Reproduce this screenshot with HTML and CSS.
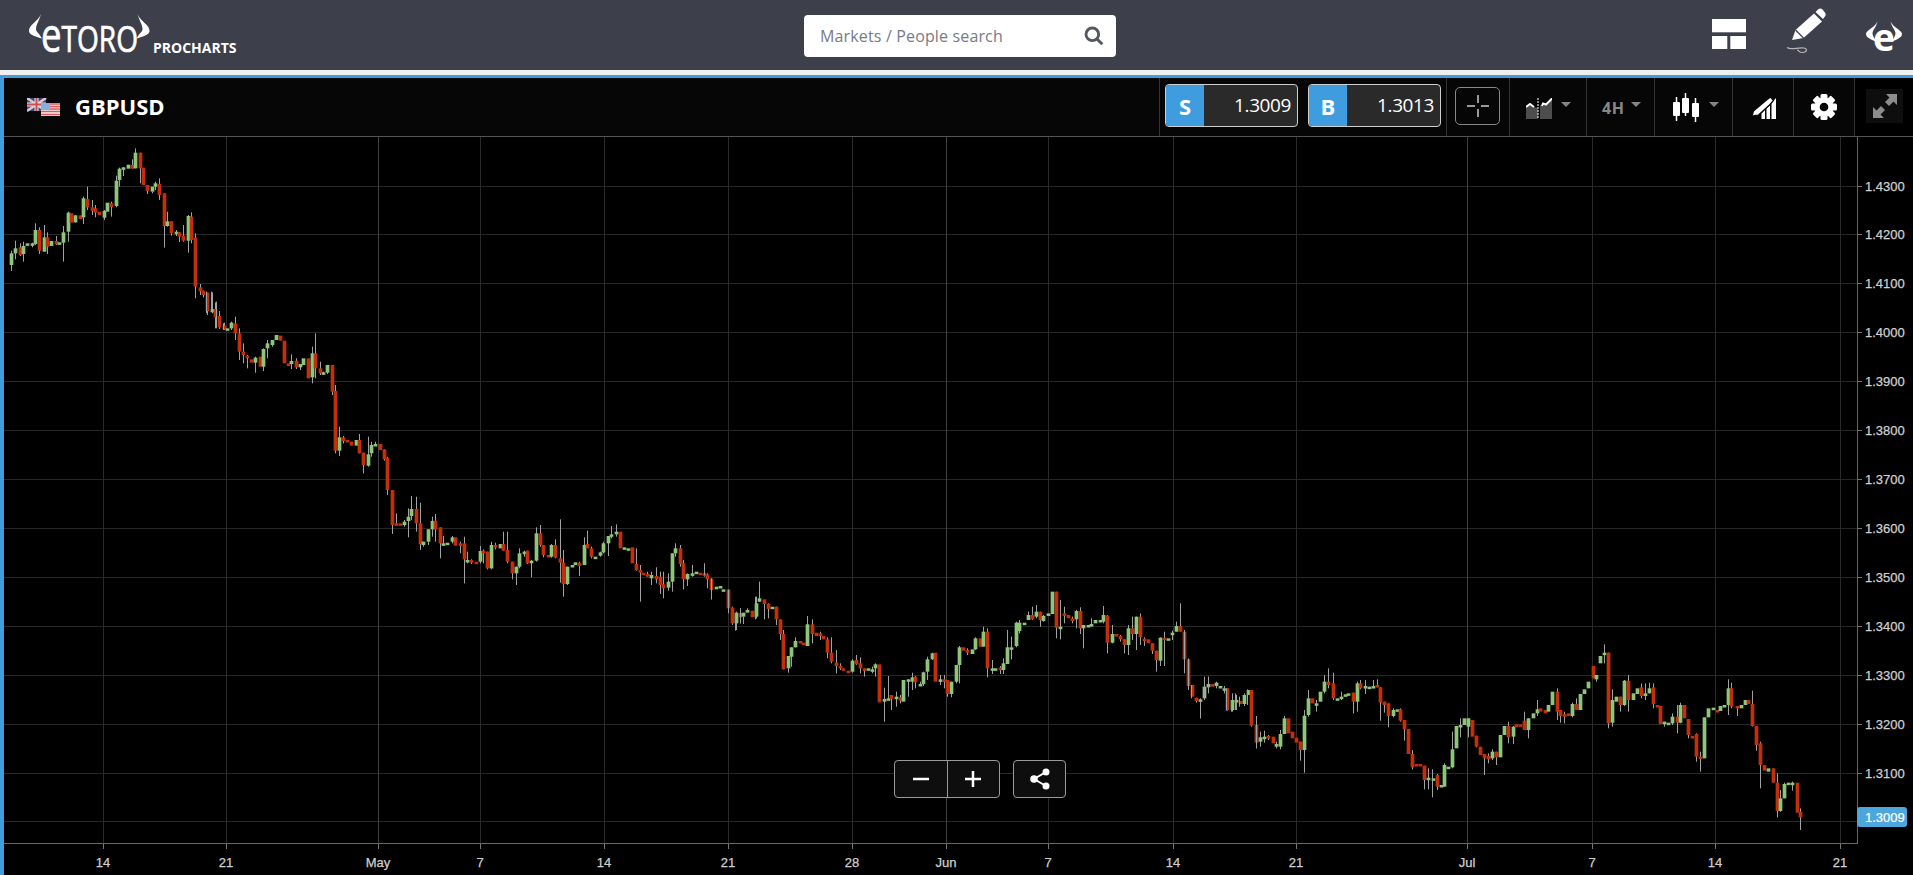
FILE: index.html
```html
<!DOCTYPE html>
<html lang="en">
<head>
<meta charset="utf-8">
<title>eToro ProCharts - GBPUSD</title>
<link rel="stylesheet" href="styles.css">
</head>
<body>
<header class="topbar">
  <div class="brand">
    <svg class="brand-logo" viewBox="0 0 240 70" aria-label="eToro ProCharts">
      <path class="logo-fill" d="M41 14C38 22 29 24 29 31C29 35 37 37 42 38.5C39 33 36 32 36 29C36 25 39 21 41 14Z"/>
      <path class="logo-fill" d="M137.500 14C140.500 22 149.500 24 149.500 31C149.500 35 141.500 37 136.500 38.500C139.500 33 142.500 32 142.500 29C142.500 25 139.500 21 137.500 14Z"/>
      <text class="logo-word" x="41" y="51.500" textLength="97" lengthAdjust="spacingAndGlyphs"><tspan class="logo-e">e</tspan>TORO</text>
      <text class="logo-sub" x="153" y="53">PROCHARTS</text>
    </svg>
  </div>
  <div class="search">
    <span class="search-text">Markets / People search</span>
    <svg class="search-icon" viewBox="0 0 18 18"><circle cx="7.500" cy="7.500" r="5.700"/><path d="M11.800 11.800L16.500 16.500"/></svg>
  </div>
  <nav class="top-actions">
    <svg class="icon-layout" viewBox="0 0 34 30"><rect width="34" height="13.300"/><rect y="17" width="15.300" height="13"/><rect x="18.300" y="17" width="15.700" height="13"/></svg>
    <svg class="icon-pencil" viewBox="0 0 46 50">
      <path class="white" d="M12 34L15.500 24L34 7.500L42 15.500L23.500 32Z"/>
      <path class="black-line" d="M15.500 24L23.500 32"/>
      <path class="white" d="M35.500 6L38 3.500C39.500 2.300 41 2.300 42.500 3.500L45 6.500C46 8 46 9.500 44.500 11L43 13Z"/>
      <path class="squiggle" d="M7 41.500C11 44.500 18 41 24 42C28 43 27 46.500 22 46.500C19 46.500 19 44 17 44"/>
    </svg>
    <svg class="icon-etoro" viewBox="0 0 36 34">
      <path class="white" d="M11.500 1C10 7 0 10 0 14C0 18 7 20 10.500 22C8.500 18 6.500 16 6.500 13.500C6.500 10 10.500 7 11.500 1Z"/>
      <path class="white" d="M24.500 1C26 7 36 10 36 14C36 18 29 20 25.500 22C27.500 18 29.500 16 29.500 13.500C29.500 10 25.500 7 24.500 1Z"/>
      <text class="etoro-e" x="18" y="31">e</text>
    </svg>
  </nav>
</header>
<div class="strip"></div>
<main class="workspace">
  <div class="toolbar">
    <div class="ticker">
      <svg class="flags" viewBox="0 0 33 18">
        <rect class="uk-bg" width="19" height="13"/>
        <path class="uk-white" d="M0 0L19 13M19 0L0 13"/>
        <path class="uk-white-thick" d="M9.500 0V13M0 6.500H19"/>
        <path class="uk-red" d="M9.500 0V13M0 6.500H19"/>
        <rect class="us-white" x="14" y="5" width="19" height="13"/>
        <path class="us-red" d="M14 6H33M14 8.500H33M14 11H33M14 13.500H33M14 16.500H33"/>
        <rect class="us-blue" x="14" y="5" width="9" height="7"/>
      </svg>
      <span class="ticker-name">GBPUSD</span>
    </div>
    <div class="tools">
      <div class="tool tool-prices">
        <div class="quote"><span class="quote-tag">S</span><span class="quote-price">1.3009</span></div>
        <div class="quote"><span class="quote-tag">B</span><span class="quote-price">1.3013</span></div>
      </div>
      <div class="tool tool-cross">
        <div class="cross-box">
          <svg class="icon-cross" viewBox="0 0 28 28"><path d="M14 3V11M14 17V25M3 14H11M17 14H25"/></svg>
        </div>
      </div>
      <div class="tool tool-type">
        <svg class="icon-area" viewBox="0 0 26 22">
          <path class="area-fill" d="M0 10L4 7L8 10L12 11V22H0ZM14 8L17 9L21 6L26 1V22H14Z"/>
          <path class="area-line" d="M0 10L4 7L8 10M16 9L17 6.500L20 7.500L26 1.500"/>
          <path class="area-dash" d="M12 1V22"/>
        </svg>
        <span class="caret"></span>
      </div>
      <div class="tool tool-period">
        <span class="period">4H</span>
        <span class="caret"></span>
      </div>
      <div class="tool tool-candle">
        <svg class="icon-candles" viewBox="0 0 26 29">
          <path class="wick" d="M3.500 4V28M12.500 0V23M22.500 5V29"/>
          <rect class="white" x="0" y="9" width="7" height="14" rx="1"/>
          <rect class="white" x="9" y="5" width="7" height="15" rx="1"/>
          <rect class="white" x="19" y="10" width="7" height="14" rx="1"/>
        </svg>
        <span class="caret"></span>
      </div>
      <div class="tool tool-draw">
        <svg class="icon-draw" viewBox="0 0 25 22">
          <path class="white" d="M25 1V22H20.500V6ZM19 8V22H15.500V11.500ZM14 13V22H10.500V16.500Z"/>
          <path class="white pencil-edge" d="M0.500 21L2.500 14L15.500 3L19.500 0L22.500 3.500L19 7.500L7.500 18L3 18.500Z"/>
        </svg>
      </div>
      <div class="tool tool-gear">
        <svg class="icon-gear" viewBox="0 0 26 26">
          <circle class="white" cx="13" cy="13" r="9.500"/>
          <g class="gear-teeth">
            <rect x="9.500" y="0" width="7" height="26" rx="1.500"/>
            <rect x="9.500" y="0" width="7" height="26" rx="1.500" transform="rotate(45 13 13)"/>
            <rect x="9.500" y="0" width="7" height="26" rx="1.500" transform="rotate(90 13 13)"/>
            <rect x="9.500" y="0" width="7" height="26" rx="1.500" transform="rotate(135 13 13)"/>
          </g>
          <circle class="gear-hole" cx="13" cy="13" r="4.300"/>
        </svg>
      </div>
      <div class="tool tool-expand">
        <div class="expand-box">
          <svg class="icon-expand" viewBox="0 0 24 24">
            <path d="M13 0H24V11L20.500 7.500L16 12L12 8L16.500 3.500Z"/>
            <path d="M11 24H0V13L3.500 16.500L8 12L12 16L7.500 20.500Z"/>
          </svg>
        </div>
      </div>
    </div>
  </div>
  <div class="plot">
    <svg id="chart" class="chart" viewBox="4 137 1909 738"></svg>
    <div class="zoom-controls">
      <div class="ctrl ctrl-zoom">
        <span class="ctrl-half"><svg class="ctrl-icon" viewBox="0 0 16 16"><path d="M0 8H16"/></svg></span>
        <span class="ctrl-half ctrl-half-right"><svg class="ctrl-icon" viewBox="0 0 16 16"><path d="M0 8H16M8 0V16"/></svg></span>
      </div>
      <div class="ctrl ctrl-share">
        <svg class="share-icon" viewBox="0 0 22 22">
          <path class="share-line" d="M17 4L5 11L17 18"/>
          <circle cx="17" cy="4" r="3.500"/><circle cx="5" cy="11" r="3.800"/><circle cx="17" cy="18" r="3.500"/>
        </svg>
      </div>
    </div>
  </div>
</main>
<script src="chart.js"></script>
</body>
</html>
```
FILE: styles.css
```css
* { box-sizing: border-box; }
html, body { margin: 0; height: 100%; }
body {
  background: #000;
  overflow: hidden;
  font-family: "Open Sans", "Liberation Sans", sans-serif;
  display: flex;
  flex-direction: column;
}
svg { display: block; }

.topbar {
  height: 70px;
  flex: none;
  background: #3d3f4b;
  display: grid;
  grid-template-columns: 804px 312px 1fr;
  align-items: start;
}
.brand-logo { width: 240px; height: 70px; }
.logo-fill { fill: #fff; }
.logo-word { font: 400 36px "Open Sans", sans-serif; fill: #fff; stroke: #fff; stroke-width: .7px; }
.logo-e { font-size: 47px; }
.logo-sub { font: 700 14px "Open Sans", sans-serif; fill: #fff; }

.search {
  margin-top: 15px;
  height: 42px;
  background: #fff;
  border-radius: 4px;
  display: flex;
  align-items: center;
  justify-content: space-between;
  padding: 0 12px 0 16px;
}
.search-text { font-size: 16px; letter-spacing: .15px; color: #777b85; }
.search-icon { width: 20px; height: 20px; fill: none; stroke: #555862; stroke-width: 2.600; }

.top-actions {
  display: flex;
  justify-content: flex-end;
  align-items: flex-start;
  padding-right: 11px;
}
.white { fill: #fff; }
.icon-layout { width: 34px; height: 30px; margin-top: 19px; fill: #fff; }
.icon-pencil { width: 46px; height: 50px; margin: 6px 0 0 34px; overflow: visible; }
.black-line { stroke: #3d3f4b; stroke-width: 1.200; fill: none; }
.squiggle { stroke: #b6b6b6; stroke-width: 1.200; fill: none; }
.icon-etoro { width: 36px; height: 34px; margin: 20px 0 0 40px; overflow: visible; }
.etoro-e { font: 700 37px "Open Sans", sans-serif; fill: #fff; text-anchor: middle; }

.strip { height: 5px; flex: none; background: #f0f0f0; }

.workspace {
  flex: 1;
  min-height: 0;
  display: flex;
  flex-direction: column;
  border-top: 3px solid #3f9ddf;
  border-left: 4px solid #3f9ddf;
  background: #000;
}
.toolbar {
  height: 59px;
  flex: none;
  background: #060606;
  border-bottom: 1px solid #555;
  display: flex;
  justify-content: space-between;
}
.ticker { display: flex; align-items: center; gap: 15px; padding: 0 0 2px 23px; }
.flags { width: 33px; height: 18px; margin-top: 2px; }
.uk-bg { fill: #3c4a78; }
.uk-white { stroke: #d9c9d0; stroke-width: 2.500; fill: none; }
.uk-white-thick { stroke: #e6e0e2; stroke-width: 4; fill: none; }
.uk-red { stroke: #cf4b52; stroke-width: 2; fill: none; }
.us-white { fill: #f4eeee; }
.us-red { stroke: #e0575b; stroke-width: 1.300; fill: none; }
.us-blue { fill: #83aee0; }
.ticker-name { font-size: 22px; font-weight: 700; color: #fff; }

.tools { display: flex; height: 100%; }
.tool {
  border-left: 1px solid #333;
  display: flex;
  position: relative;
  align-items: flex-start;
}
.tool-prices { width: 287px; gap: 10px; padding: 6px 0 0 5px; }
.quote {
  width: 133px;
  height: 43px;
  display: flex;
  background: #2a2a2a;
  border: 1px solid #cfcfcf;
  border-radius: 4px;
  overflow: hidden;
}
.quote-tag {
  width: 38px;
  background: #3f9ddf;
  color: #fff;
  font-size: 22px;
  font-weight: 700;
  display: flex;
  align-items: center;
  justify-content: center;
}
.quote-price {
  flex: 1;
  color: #fff;
  font-size: 19px;
  letter-spacing: -.4px;
  text-align: right;
  padding: 8px 6px 0 0;
  line-height: 24px;
}
.tool-cross { width: 63px; padding: 9px 0 0 8px; }
.cross-box {
  width: 45px;
  height: 38px;
  border: 1px solid #888;
  border-radius: 5px;
  display: flex;
  align-items: center;
  justify-content: center;
}
.icon-cross { width: 28px; height: 28px; fill: none; stroke: #9a9a9a; stroke-width: 2; }
.tool-type { width: 77px; padding: 19px 0 0 16px; }
.icon-area { width: 26px; height: 22px; }
.area-fill { fill: #4d4d4d; }
.area-line { fill: none; stroke: #fff; stroke-width: 2; }
.area-dash { fill: none; stroke: #fff; stroke-width: 1; stroke-dasharray: 2 1; }
.caret {
  width: 0;
  height: 0;
  border-left: 5.500px solid transparent;
  border-right: 5.500px solid transparent;
  border-top: 5px solid #858585;
  margin: 5px 0 0 9px;
}
.tool-period { width: 68px; padding: 21px 0 0 15px; }
.tool-period .caret { margin: 3px 0 0 7px; }
.period { font-size: 16px; font-weight: 700; color: #888; line-height: 18px; letter-spacing: .5px; }
.tool-candle { width: 78px; padding: 15px 0 0 18px; }
.tool-candle .caret { margin: 9px 0 0 10px; }
.icon-candles { width: 26px; height: 29px; }
.wick { stroke: #fff; stroke-width: 1.500; fill: none; }
.tool-draw { width: 61px; padding: 19px 0 0 18px; }
.icon-draw { width: 25px; height: 22px; }
.pencil-edge { stroke: #060606; stroke-width: 1.200; }
.tool-gear { width: 61px; padding: 16px 0 0 17px; }
.icon-gear { width: 26px; height: 26px; }
.gear-teeth { fill: #fff; }
.gear-hole { fill: #060606; }
.tool-expand { width: 59px; background: #000; padding: 11px 0 0 11px; }
.expand-box {
  width: 37px;
  height: 34px;
  background: #0e0e0e;
  display: flex;
  align-items: center;
  justify-content: center;
}
.icon-expand { width: 24px; height: 24px; fill: #8d8d8d; }

.plot { flex: 1; min-height: 0; position: relative; }
.chart { width: 1909px; height: 738px; }
.grid-h { fill: #272727; }
.grid-v { fill: #2b2b2b; }
.grid-month { fill: #404040; }
.axis-line { fill: #666; }
.axis-tick { fill: #777; }
.axis-label {
  font: 400 13px "Liberation Sans", Arial, sans-serif;
  fill: #d0d0d0;
  stroke: #d0d0d0;
  stroke-width: .25px;
}
.axis-label-x { text-anchor: middle; }
.last-box { fill: #4da6dc; }
.last-label {
  font: 400 13px "Liberation Sans", Arial, sans-serif;
  fill: #fff;
  stroke: #fff;
  stroke-width: .2px;
}
.c-wick { fill: #a2a2a2; }
.c-up { fill: #8dc67b; }
.c-down { fill: #c2300b; }

.zoom-controls {
  position: absolute;
  left: 890px;
  top: 623px;
  display: flex;
  gap: 13px;
}
.ctrl {
  height: 38px;
  background: #0e0e0e;
  border: 1px solid #9a9a9a;
  border-radius: 4px;
  display: flex;
  align-items: center;
  justify-content: center;
}
.ctrl-zoom { width: 106px; }
.ctrl-share { width: 53px; }
.ctrl-half { flex: 1; height: 100%; display: flex; align-items: center; justify-content: center; }
.ctrl-half-right { border-left: 1px solid #9a9a9a; }
.ctrl-icon { width: 16px; height: 16px; stroke: #fff; stroke-width: 2.500; fill: none; }
.share-icon { width: 22px; height: 22px; fill: #fff; }
.share-line { stroke: #fff; stroke-width: 2; fill: none; }
```
FILE: chart.js
```js
var NS = "http://www.w3.org/2000/svg";
var svg = document.getElementById("chart");

function rect(x, y, w, h, cls) {
  var r = document.createElementNS(NS, "rect");
  r.setAttribute("x", x);
  r.setAttribute("y", y);
  r.setAttribute("width", w);
  r.setAttribute("height", h);
  r.setAttribute("class", cls);
  svg.appendChild(r);
}
function label(x, y, str, cls) {
  var t = document.createElementNS(NS, "text");
  t.setAttribute("x", x);
  t.setAttribute("y", y);
  t.setAttribute("class", cls);
  t.textContent = str;
  svg.appendChild(t);
}

var plotRight = 1857, axisY = 843, plotTop = 137;

// horizontal grid and price axis
var prices = ["1.4300","1.4200","1.4100","1.4000","1.3900","1.3800","1.3700","1.3600","1.3500","1.3400","1.3300","1.3200","1.3100"];
prices.forEach(function (p, i) {
  var y = Math.round(185.5 + i * 48.98);
  rect(4, y, plotRight - 4, 1, "grid-h");
  rect(plotRight, y, 5, 1, "axis-tick");
  label(1865, y + 5, p, "axis-label");
});
rect(4, 821, plotRight - 4, 1, "grid-h");

// vertical grid and time axis
var times = [[103,"14"],[226,"21"],[378,"May",1],[480,"7"],[604,"14"],[728,"21"],[852,"28"],[946,"Jun",1],[1048,"7"],[1173,"14"],[1296,"21"],[1467,"Jul",1],[1592,"7"],[1715,"14"],[1840,"21"]];
times.forEach(function (t) {
  rect(t[0], plotTop, 1, axisY - plotTop, t[2] ? "grid-month" : "grid-v");
  rect(t[0], axisY, 1, 6, "axis-tick");
  label(t[0], 867, t[1], "axis-label axis-label-x");
});
rect(4, axisY, plotRight - 4 + 1, 1, "axis-line");
rect(plotRight, plotTop, 1, axisY - plotTop + 1, "axis-line");

// candles traced as [x, open, close] triples in crop coordinates
var crops = [
{ x: 0, y: 130, sx: 3, sy: 3,
  c: [35,405,370,46,370,355,60,352,375,71,372,348,82,344,340,96,342,340,106,342,300,118,300,362,132,365,322,143,322,350,155,348,333,168,333,343,178,340,337,190,338,307,204,305,248,215,250,278,226,277,256,240,256,267,251,262,205,262,207,232,276,232,242,287,235,248,298,245,255,312,263,243,323,245,218,334,220,231,348,228,152,359,150,116,370,118,112,384,116,104,396,105,116,406,115,68,420,68,115,431,113,165,442,165,183,456,185,170,467,170,160,478,162,195,492,190,288,503,288,274,514,274,310,528,308,305,539,307,320,550,317,332,564,332,258,575,260,330,586,323,470,600,472,484,611,482,495,622,488,543,636,547,537,647,537,562,658,558,592,672,587,598,683,597,595,694,595,578],
  w: [35,362,423,46,332,388,60,340,378,71,335,395,96,338,352,106,280,345,118,292,372,132,285,365,143,307,372,168,318,345,190,288,395,204,245,335,226,255,278,251,200,282,262,170,240,276,210,255,287,225,262,312,240,270,334,215,260,348,137,232,359,113,170,370,112,138,396,88,116,406,55,115,420,68,160,442,165,192,456,185,190,467,155,180,478,145,210,492,190,353,503,245,290,514,274,317,528,300,318,539,307,336,550,285,335,564,255,368,575,247,340,586,310,505,600,462,495,611,482,502,622,488,555,636,487,550,647,517,595,658,543,597,672,578,600,694,575,600]
},
{ x: 200, y: 290, sx: 2.8, sy: 3,
  c: [100,100,130,111,130,185,122,185,195,134,197,205,145,208,218,156,218,203,168,200,230,179,230,177,190,175,160,202,165,150,213,150,135,224,137,152,236,152,220,247,220,228,257,222,213,269,212,232,280,232,222,290,225,205,303,205,265,314,262,190,323,190,235,336,235,250,347,250,247,358,248,225,370,225,305,380,303,482,391,482,442,403,442,453,414,450,457,424,455,467,437,467,450,447,450,490,458,488,525,471,527,493,481,490,465,492,465,462,505,462,480,516,478,508,526,503,600,538,600,705,549,700,705,560,700,705,572,705,695,583,693,680,592,678,657,605,657,700,616,700,763,627,765,755,639,755,718,650,718,693,660,692,718,672,712,760,683,765,760,694,762,758,707,755,742,716,742,767,728,760,764,740,760,808,750,814,810,760,810,818,773,815,820,784,815,783,795,782,790,806,785,835,817,835,765,828,765,772,840,775,762,851,762,782,862,780,815,875,815,850,885,850,830,895,830,790,908,790,785,918,782,820,929,820,812,941,812,730,952,730,765,963,765,795,975,795,802,985,800,765,996,765,803,1008,805,818,1019,818,882,1030,882,830,1042,832,825,1052,825,817,1063,818,828,1076,825,765,1086,762,775,1097,775,800,1108,802,800,1120,797,787,1131,787,760,1143,760,738,1153,738,733,1165,733,725,1177,725,775,1188,778,772,1199,778,775,1211,772,820,1221,822,840,1232,840,848,1243,848,852,1254,852,858,1265,865,855,1278,858,868,1288,860,885,1299,883,895,1311,893,875,1322,875,790,1332,790,775,1345,775,822,1355,820,868,1366,868,852,1378,855,850,1389,850,845,1400,848,852,1412,850,855,1422,853,868,1433,866,900,1445,898,890,1456,890,888,1467,905,898,1480,898,955,1490,953,1000,1501,1000,968,1512,970,982,1523,980,968,1534,968,960,1546,962,982,1557,980,940],
  w: [45,35,115,19,5,70,32,5,60,67,100,120,100,80,150,111,115,210,122,160,220,134,195,235,156,200,248,179,175,243,190,150,205,202,150,170,257,193,237,269,205,237,280,222,240,314,170,280,323,130,265,336,215,255,347,245,255,358,225,252,370,225,315,380,285,490,391,410,498,403,438,460,447,432,490,458,488,550,471,440,530,481,455,500,492,455,465,516,478,512,526,500,615,538,600,732,549,670,705,572,690,710,583,655,742,592,618,690,605,620,725,616,638,780,627,755,770,639,718,765,650,680,740,660,672,755,672,712,805,683,738,768,707,738,760,728,755,790,740,740,880,750,785,820,760,808,822,784,768,820,795,778,820,806,785,838,817,755,838,828,758,778,851,725,782,862,725,820,875,815,868,885,830,885,895,775,835,908,782,800,918,782,822,929,810,862,941,712,815,952,705,770,963,765,802,985,762,803,996,748,805,1008,688,878,1019,780,920,1030,830,885,1063,815,858,1076,742,820,1086,722,772,1097,770,805,1120,785,800,1131,755,790,1143,738,798,1153,708,745,1165,703,740,1221,775,842,1232,825,935,1254,845,860,1265,845,885,1278,832,880,1288,845,912,1299,845,925,1311,850,902,1322,790,905,1332,760,800,1345,765,830,1355,810,898,1366,850,888,1378,825,860,1412,822,860,1422,850,895,1433,866,928,1480,898,965,1490,950,1005,1501,965,1020,1512,955,1000,1534,955,965,1557,920,985]
},
{ x: 700, y: 560, sx: 2.8, sy: 3,
  c: [167,125,115,180,118,132,191,132,147,202,147,140,213,140,178,224,178,222,235,222,328,247,325,288,257,290,262,268,262,243,280,243,250,291,248,255,302,258,193,314,193,222,325,218,228,336,220,228,347,228,238,358,238,278,369,278,305,381,308,318,392,318,325,403,325,332,416,332,338,427,335,302,437,300,313,449,310,325,460,325,332,471,332,325,482,330,328,492,325,313,503,313,427,516,425,417,527,418,415,537,405,417,549,412,410,560,412,422,571,425,360,583,365,358,594,365,352,604,350,367,616,374,372,627,372,337,637,335,298,650,298,280,660,278,365,672,365,358,684,358,365,694,360,402,705,402,365,718,365,315,727,315,262,738,262,272,750,270,278,762,282,268,772,268,235,785,235,260,795,260,215,806,215,325,819,328,325,828,327,325,840,323,330,851,330,310,862,312,262,872,264,262,885,258,188,895,213,188,908,190,188,920,180,165,931,165,178,941,170,155,952,155,180,963,183,168,975,168,160,987,162,95,997,95,203,1008,203,200,1020,160,165,1031,165,175,1042,175,183,1053,178,153,1065,153,205,1075,205,195,1087,197,195,1097,194,192,1108,190,180,1120,182,180,1130,185,165,1142,167,248,1155,248,222,1165,222,228,1177,228,238,1188,238,255,1199,255,205,1210,205,222,1222,222,170,1233,170,232,1245,236,238,1257,238,250,1267,250,272,1277,272,300,1290,302,233,1300,233,240,1312,237,235,1323,220,218,1333,215,198,1344,198,215,1357,215,298,1367,298,378,1378,375,410,1391,413,423,1401,423,418,1412,415,380,1424,382,372,1435,372,380,1445,378,368,1458,385,378,1468,388,385,1478,385,450,1491,450,420,1501,422,420,1512,423,432,1525,432,405,1535,405,390,1545,390,497,1558,495,548],
  w: [12,10,45,32,55,118,80,90,160,100,160,212,112,145,190,122,170,192,156,110,178,167,65,125,180,120,178,191,130,175,213,140,195,224,178,240,235,210,328,247,288,338,257,262,320,268,232,262,302,168,258,314,178,250,336,215,240,358,232,295,369,232,310,381,270,340,392,310,330,427,298,338,437,285,315,449,292,340,460,325,350,482,320,340,492,310,350,516,383,485,527,348,420,537,405,450,549,395,440,560,405,430,583,358,410,594,338,390,604,348,385,616,365,378,627,335,378,637,290,360,650,278,300,672,345,375,684,345,385,694,360,410,705,365,412,718,315,370,727,258,370,750,265,285,772,232,270,795,200,260,806,205,352,819,300,342,840,318,342,851,295,342,862,210,312,872,230,298,885,185,262,895,180,220,920,155,180,931,140,180,941,135,175,952,155,200,963,165,185,997,95,235,1008,120,238,1020,140,190,1042,170,190,1053,150,205,1065,142,222,1075,195,265,1097,175,200,1130,138,190,1142,165,280,1155,195,250,1177,225,245,1188,238,280,1199,195,285,1210,170,240,1222,170,270,1233,160,255,1245,232,258,1267,250,282,1277,272,335,1290,232,318,1300,215,318,1323,212,240,1333,185,215,1344,130,215,1357,215,338,1367,298,380,1391,413,428,1401,418,475,1412,350,415,1424,350,400,1445,365,385,1468,378,400,1478,385,452,1491,400,455,1501,405,450,1525,400,438,1545,390,500,1558,468,565]
},
{ x: 1180, y: 630, sx: 2.45, sy: 3,
  c: [197,335,322,207,322,320,218,318,325,228,320,340,237,350,342,247,350,312,257,312,265,265,265,310,276,305,325,285,323,338,295,335,360,305,360,257,315,255,205,325,205,220,335,222,220,345,215,185,354,185,155,365,155,165,375,160,205,385,207,205,395,205,200,405,198,193,414,195,190,424,188,215,434,215,160,443,160,175,455,175,168,465,172,170,475,170,168,483,165,172,491,172,218,501,215,225,512,220,258,522,258,240,532,240,238,541,238,272,550,270,298,559,297,372,570,372,412,580,402,408,590,402,408,600,407,450,610,450,443,620,447,445,630,435,470,640,470,465,647,470,405,657,412,410,667,412,358,677,355,288,688,287,285,697,285,265,707,290,265,717,270,320,727,317,350,736,350,375,746,372,385,756,378,388,766,385,365,776,365,382,786,382,315,795,315,288,806,288,322,816,320,290,825,283,292,835,283,287,845,272,300,853,300,265,865,265,250,875,250,238,883,235,245,895,240,250,904,245,225,912,225,185,924,185,245,933,240,258,942,253,258,951,250,258,961,258,222,971,222,240,982,240,192,992,192,178,1001,175,155,1012,108,145,1021,148,135,1031,100,78,1041,72,68,1050,68,280,1060,278,210,1070,215,200,1079,200,225,1088,225,152,1100,152,210,1110,210,190,1120,192,175,1130,172,198,1140,198,190,1150,190,175,1160,172,222,1170,225,232,1177,228,282,1188,282,275,1198,280,278,1206,280,260,1218,260,278,1227,278,225,1236,225,265,1247,267,315,1256,318,322,1265,312,380,1276,380,387,1284,385,262,1294,262,235,1306,237,233,1316,240,243,1325,243,228,1335,232,225,1345,225,175,1352,175,230,1365,228,235,1375,235,225,1385,225,210,1394,210,222,1403,222,288,1412,288,345,1423,340,405,1432,405,422,1441,425,415,1453,415,458,1463,458,543,1471,543,505,1482,505,462,1491,462,458,1501,460,458,1512,458,548,1521,545,562],
  w: [12,0,130,20,85,180,28,165,205,50,205,265,60,148,210,70,140,175,115,175,242,125,210,245,135,190,240,145,200,230,165,178,225,187,258,355,197,305,350,207,302,338,218,315,330,237,335,355,247,300,358,257,258,312,295,335,392,305,240,428,315,180,260,335,210,245,354,135,190,365,115,175,375,128,210,395,185,210,424,188,250,434,155,245,443,150,178,455,150,192,475,150,175,483,148,172,491,172,272,501,215,248,512,220,292,522,235,262,541,235,275,550,270,332,570,360,418,600,407,478,610,415,478,618,418,502,630,432,480,647,400,470,667,305,415,688,265,322,707,265,322,727,317,352,746,372,435,756,370,400,766,358,390,776,365,405,806,275,340,816,288,342,845,245,300,853,265,325,875,210,258,924,175,270,933,240,278,942,245,280,961,218,262,971,205,240,1021,135,155,1041,43,100,1050,68,295,1060,178,290,1079,200,245,1088,150,228,1100,135,245,1130,160,205,1140,160,210,1150,158,190,1160,160,235,1188,275,290,1206,250,285,1218,225,310,1227,218,280,1247,267,325,1265,310,395,1276,365,425,1345,148,255,1352,158,235,1365,228,258,1403,182,290,1412,288,362,1423,335,475,1453,415,458,1463,430,562,1471,480,545,1482,458,505,1501,455,482,1521,535,600]
}];

crops.forEach(function (crop) {
  function px(v) { return Math.round(crop.x + v / crop.sx - 1.5); }
  function py(v) { return crop.y + v / crop.sy; }
  for (var i = 0; i < crop.w.length; i += 3) {
    var wy = py(crop.w[i + 1]);
    rect(px(crop.w[i]) + 1, wy, 1, py(crop.w[i + 2]) - wy, "c-wick");
  }
  for (var j = 0; j < crop.c.length; j += 3) {
    var open = py(crop.c[j + 1]), close = py(crop.c[j + 2]);
    var up = close <= open;
    var t = Math.min(open, close), h = Math.max(Math.abs(open - close), 2.5);
    rect(px(crop.c[j]) - 0.35, t, 3.7, h, up ? "c-up" : "c-down");
  }
});

// last price tag, over the axis
var tag = document.createElementNS(NS, "rect");
tag.setAttribute("x", 1857);
tag.setAttribute("y", 807);
tag.setAttribute("width", 50);
tag.setAttribute("height", 20);
tag.setAttribute("rx", 3);
tag.setAttribute("class", "last-box");
svg.appendChild(tag);
label(1865, 822, "1.3009", "last-label");
```
